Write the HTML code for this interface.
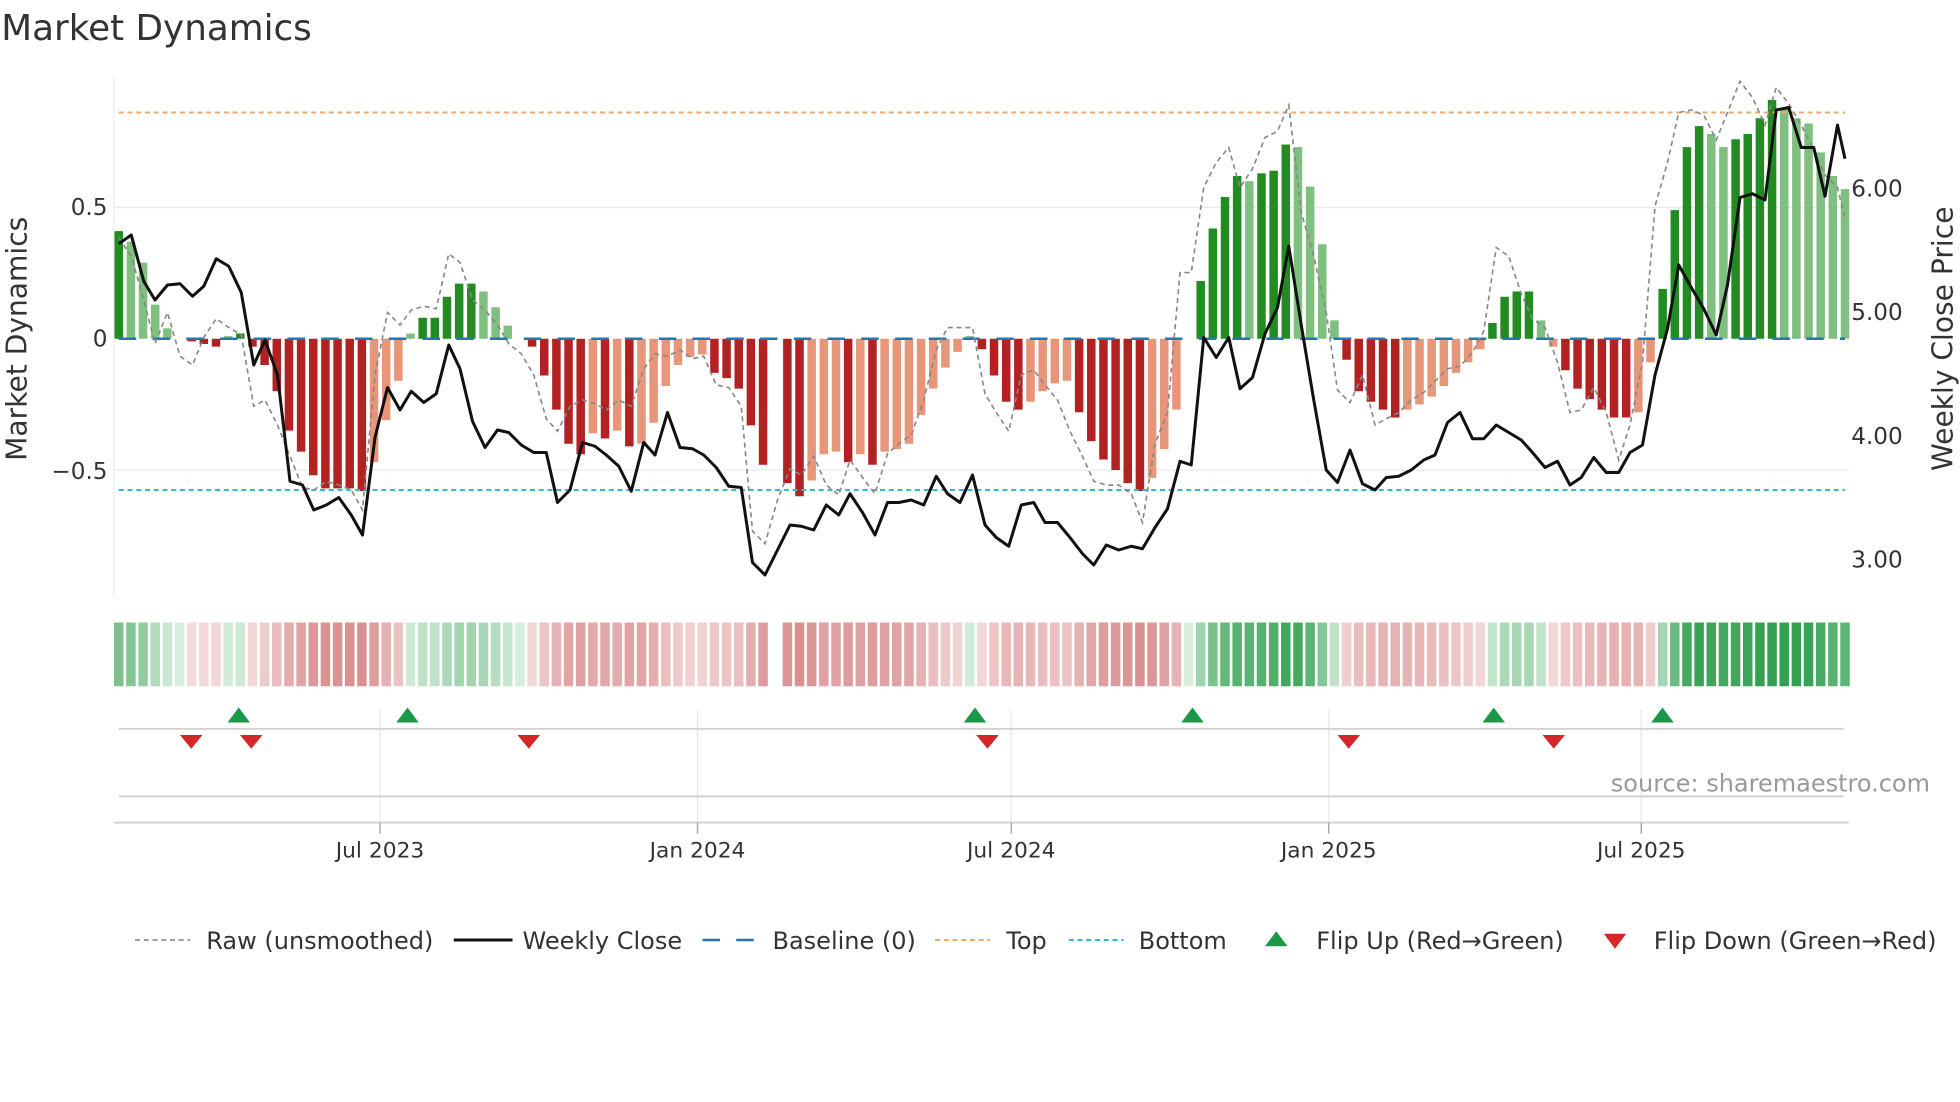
<!DOCTYPE html>
<html><head><meta charset="utf-8">
<style>
html,body{margin:0;padding:0;background:#fff;}
svg{display:block;font-family:"DejaVu Sans","Liberation Sans",sans-serif;}
</style></head>
<body>
<svg id="s" width="1960" height="1102" viewBox="0 0 1568 881.6" xmlns="http://www.w3.org/2000/svg">
<rect width="1568" height="882" fill="#fff"/>
<text x="1" y="32" font-size="28.6" fill="#333">Market Dynamics</text>
<line x1="91" y1="166" x2="1479" y2="166" stroke="#ebebeb" stroke-width="1"/>
<line x1="91" y1="376" x2="1479" y2="376" stroke="#ebebeb" stroke-width="1"/>
<line x1="91" y1="62" x2="91" y2="478" stroke="#eee" stroke-width="1"/>
<g id="bars"></g>
<line x1="95" y1="271" x2="1476" y2="271" stroke="#1f77b4" stroke-width="2" stroke-dasharray="14,13"/>
<line x1="95" y1="90" x2="1476" y2="90" stroke="#f0a868" stroke-width="1.6" stroke-dasharray="4,3"/>
<line x1="95" y1="392" x2="1476" y2="392" stroke="#2bbfd4" stroke-width="1.6" stroke-dasharray="4,3"/>
<polyline id="raw" fill="none" stroke="#888" stroke-width="1.3" stroke-dasharray="4,3"/>
<polyline id="close" fill="none" stroke="#111" stroke-width="2.4" stroke-linejoin="round"/>
<g font-size="18.5" fill="#333">
<text x="86" y="172" text-anchor="end">0.5</text>
<text x="86" y="277" text-anchor="end">0</text>
<text x="86" y="383" text-anchor="end">−0.5</text>
<text x="1481" y="157">6.00</text>
<text x="1481" y="256">5.00</text>
<text x="1481" y="355">4.00</text>
<text x="1481" y="454">3.00</text>
</g>
<text transform="translate(21,271) rotate(-90)" font-size="22.5" fill="#333" text-anchor="middle">Market Dynamics</text>
<text transform="translate(1562,271) rotate(-90)" font-size="22.5" fill="#333" text-anchor="middle">Weekly Close Price</text>
<g id="heat"></g>
<g stroke="#e8e8e8" stroke-width="1">
<line x1="304" y1="568" x2="304" y2="660"/><line x1="558" y1="568" x2="558" y2="660"/>
<line x1="809" y1="568" x2="809" y2="660"/><line x1="1063" y1="568" x2="1063" y2="660"/>
<line x1="1313" y1="568" x2="1313" y2="660"/>
</g>
<line x1="95" y1="583" x2="1475" y2="583" stroke="#d0d0d0" stroke-width="1.5"/>
<line x1="95" y1="637" x2="1475" y2="637" stroke="#d0d0d0" stroke-width="1.5"/>
<line x1="91" y1="658" x2="1479" y2="658" stroke="#d0d0d0" stroke-width="1.5"/>
<g stroke="#aaa" stroke-width="1.2">
<line x1="304" y1="658" x2="304" y2="667"/><line x1="558" y1="658" x2="558" y2="667"/>
<line x1="809" y1="658" x2="809" y2="667"/><line x1="1063" y1="658" x2="1063" y2="667"/>
<line x1="1313" y1="658" x2="1313" y2="667"/>
</g>
<g id="flips"></g>
<text x="1544" y="633" font-size="19.2" fill="#999" text-anchor="end">source: sharemaestro.com</text>
<g font-size="17.4" fill="#333" text-anchor="middle">
<text x="304" y="686">Jul 2023</text><text x="558" y="686">Jan 2024</text>
<text x="809" y="686">Jul 2024</text><text x="1063" y="686">Jan 2025</text>
<text x="1313" y="686">Jul 2025</text>
</g>
<g font-size="19.2" fill="#333">
<line x1="108" y1="752" x2="152" y2="752" stroke="#888" stroke-width="1.3" stroke-dasharray="4,3"/>
<text x="165" y="759">Raw (unsmoothed)</text>
<line x1="363" y1="752" x2="410" y2="752" stroke="#111" stroke-width="2.4"/>
<text x="418" y="759">Weekly Close</text>
<line x1="562" y1="752" x2="606" y2="752" stroke="#1f77b4" stroke-width="2" stroke-dasharray="14,13"/>
<text x="618" y="759">Baseline (0)</text>
<line x1="748" y1="752" x2="792" y2="752" stroke="#f0a868" stroke-width="1.6" stroke-dasharray="4,3"/>
<text x="805" y="759">Top</text>
<line x1="855" y1="752" x2="899" y2="752" stroke="#2bbfd4" stroke-width="1.6" stroke-dasharray="4,3"/>
<text x="911" y="759">Bottom</text>
<polygon points="1012,757 1030,757 1021,745" fill="#1a9a48"/>
<text x="1053" y="759">Flip Up (Red→Green)</text>
<polygon points="1283,747 1301,747 1292,759" fill="#d62728"/>
<text x="1323" y="759">Flip Down (Green→Red)</text>
</g>
</svg>
<script>
var V=[0.41,0.37,0.29,0.13,0.04,0,-0.01,-0.02,-0.03,0.01,0.02,-0.03,-0.1,-0.2,-0.35,-0.43,-0.52,-0.57,-0.57,-0.57,-0.58,-0.47,-0.31,-0.16,0.02,0.08,0.08,0.16,0.21,0.21,0.18,0.12,0.05,0,-0.03,-0.14,-0.27,-0.4,-0.44,-0.36,-0.38,-0.35,-0.41,-0.4,-0.32,-0.18,-0.1,-0.07,-0.06,-0.13,-0.15,-0.19,-0.33,-0.48,0,-0.55,-0.6,-0.54,-0.44,-0.43,-0.47,-0.44,-0.48,-0.43,-0.42,-0.4,-0.29,-0.19,-0.11,-0.05,0.01,-0.04,-0.14,-0.24,-0.27,-0.24,-0.2,-0.17,-0.16,-0.28,-0.39,-0.46,-0.5,-0.55,-0.58,-0.53,-0.42,-0.27,0,0.22,0.42,0.54,0.62,0.6,0.63,0.64,0.74,0.73,0.58,0.36,0.07,-0.08,-0.2,-0.24,-0.27,-0.3,-0.27,-0.25,-0.22,-0.18,-0.13,-0.09,-0.04,0.06,0.16,0.18,0.18,0.07,-0.03,-0.12,-0.19,-0.23,-0.27,-0.3,-0.3,-0.28,-0.09,0.19,0.49,0.73,0.81,0.78,0.73,0.76,0.78,0.84,0.91,0.88,0.84,0.82,0.71,0.62,0.57];
var ns="http://www.w3.org/2000/svg";
function el(t,a,p){var e=document.createElementNS(ns,t);for(var k in a)e.setAttribute(k,a[k]);p.appendChild(e);return e;}
var bars=document.getElementById('bars'),heat=document.getElementById('heat');
var n=V.length,dx=(1476-95)/(n-1);
function mix(a,b,t){return 'rgb('+a.map(function(x,i){return Math.round(x+(b[i]-x)*t)}).join(',')+')';}
for(var i=0;i<n;i++){
 var v=V[i],x=95+dx*i,prev=i?Math.abs(V[i-1]):0,dark=Math.abs(v)>=prev-0.001;
 var y0=271,h=v*210;
 if(v!==0){
  var c=v>0?(dark?'#228b22':'#7fbf7f'):(dark?'#b22222':'#e8967a');
  el('rect',{x:x-3.4,y:v>0?y0-h:y0,width:6.8,height:Math.abs(h),fill:c},bars);
 }
 if(i===54)continue;
 var t=Math.min(Math.abs(v)/0.85,1);
 var hc=v>=0?mix([214,238,220],[50,160,80],Math.pow(t,0.8)):mix([245,222,222],[208,118,118],Math.pow(t,0.8));
 el('rect',{x:x-3.8,y:498,width:7.6,height:51,fill:hc},heat);
}
var C=[[95,195],[105,188],[115,225],[124,240],[134,228],[144,227],[154,237],[163,229],[173,207],[183,213],[193,234],[203,292],[212,272],[222,300],[232,385],[242,388],[251,408],[261,404],[271,398],[281,412],[290,428],[300,350],[310,310],[320,328],[329,313],[339,322],[349,315],[359,276],[368,295],[378,337],[388,358],[398,344],[407,346],[417,356],[427,362],[437,362],[446,402],[456,392],[466,354],[476,357],[485,364],[495,373],[505,393],[515,354],[524,364],[534,330],[544,358],[554,359],[563,364],[573,374],[583,389],[593,390],[602,450],[612,460],[622,440],[632,420],[641,421],[651,424],[661,404],[671,412],[680,395],[690,410],[700,428],[710,402],[719,402],[729,400],[739,404],[749,381],[758,395],[768,402],[778,380],[788,420],[797,430],[807,437],[817,404],[827,402],[836,418],[846,418],[856,430],[866,443],[875,452],[885,436],[895,440],[905,437],[914,439],[924,422],[934,407],[944,369],[953,372],[963,270],[973,286],[983,270],[992,311],[1002,302],[1012,267],[1022,246],[1031,197],[1041,260],[1051,320],[1061,376],[1070,386],[1080,360],[1090,387],[1100,392],[1109,382],[1119,381],[1129,376],[1139,368],[1148,364],[1158,338],[1168,330],[1178,351],[1187,351],[1197,340],[1207,346],[1217,352],[1226,362],[1236,374],[1246,369],[1256,388],[1265,382],[1275,366],[1285,378],[1295,378],[1304,362],[1314,356],[1324,300],[1334,263],[1343,212],[1353,230],[1363,247],[1373,268],[1382,228],[1392,158],[1402,155],[1412,160],[1421,88],[1431,86],[1441,118],[1451,118],[1460,157],[1470,100],[1476,127]];
var R=[[95,190],[105,205],[115,240],[124,275],[134,250],[144,285],[154,292],[163,270],[173,255],[183,262],[193,268],[203,325],[212,320],[222,340],[232,365],[242,390],[251,392],[261,385],[271,388],[281,392],[290,408],[300,300],[310,250],[320,260],[329,248],[339,245],[349,247],[359,203],[368,210],[378,240],[388,248],[398,260],[407,275],[417,283],[427,300],[437,335],[446,345],[456,325],[466,320],[476,323],[485,328],[495,320],[505,325],[515,295],[524,283],[534,285],[544,280],[554,287],[563,285],[573,308],[583,310],[593,325],[602,425],[612,435],[622,400],[632,375],[641,380],[651,365],[661,388],[671,396],[680,368],[690,382],[700,395],[710,363],[719,355],[729,348],[739,320],[749,280],[758,262],[768,262],[778,262],[788,315],[797,330],[807,345],[817,300],[827,296],[836,308],[846,320],[856,345],[866,365],[875,385],[885,388],[895,388],[905,395],[914,418],[924,355],[934,330],[944,218],[953,218],[963,150],[973,130],[983,118],[992,150],[1002,135],[1012,110],[1022,105],[1031,84],[1041,170],[1051,205],[1061,250],[1070,312],[1080,322],[1090,300],[1100,340],[1109,335],[1119,330],[1129,320],[1139,314],[1148,305],[1158,295],[1168,293],[1178,282],[1187,265],[1197,198],[1207,205],[1217,235],[1226,255],[1236,262],[1246,290],[1256,330],[1265,328],[1275,310],[1285,330],[1295,368],[1304,340],[1314,290],[1324,165],[1334,130],[1343,90],[1353,88],[1363,92],[1373,112],[1382,90],[1392,65],[1402,78],[1412,100],[1421,70],[1431,83],[1441,100],[1451,120],[1460,140],[1470,150],[1476,175]];
document.getElementById('close').setAttribute('points',C.map(function(p){return p.join(',')}).join(' '));
document.getElementById('raw').setAttribute('points',R.map(function(p){return p.join(',')}).join(' '));
var fl=document.getElementById('flips');
[191,326,780,954,1195,1330].forEach(function(x){el('polygon',{points:(x-9)+',578 '+(x+9)+',578 '+x+',566',fill:'#1a9a48'},fl);});
[153,201,423,790,1079,1243].forEach(function(x){el('polygon',{points:(x-9)+',588 '+(x+9)+',588 '+x+',599',fill:'#d62728'},fl);});
</script>
</body></html>
